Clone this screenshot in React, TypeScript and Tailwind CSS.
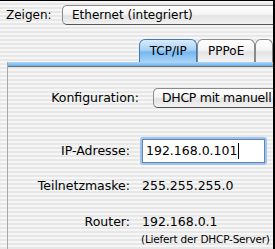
import React from "react";

const stripes =
  "bg-[repeating-linear-gradient(180deg,#f6f6f6_0px,#f6f6f6_2px,#e7e7e7_2px,#e7e7e7_4px)]";

function Popup({ label, className }: { label: string; className?: string }) {
  return (
    <div
      className={`flex h-[20px] items-center rounded-l-[5px] border border-r-0 border-[#8a8a8a] border-b-[#555] bg-[linear-gradient(180deg,#ffffff_0%,#f4f4f4_45%,#e2e2e2_55%,#f2f2f2_100%)] whitespace-nowrap overflow-hidden ${className ?? ""}`}
    >
      {label}
    </div>
  );
}

export default function App() {
  return (
    <div
      className={`flex h-[249px] w-[275px] flex-col overflow-hidden border-t border-r-2 border-black text-black ${stripes}`}
      style={{ fontFamily: '"DejaVu Sans", sans-serif' }}
    >
      {/* Zeigen */}
      <div className="mt-[4px] flex items-center pl-[6px] text-[12px]">
        <span className="w-[56px]">Zeigen:</span>
        <Popup label="Ethernet (integriert)" className="flex-1 pl-[9px]" />
      </div>

      {/* tabs */}
      <div className="mt-[14px] flex h-[23px] pl-[139px] text-[12px]">
        <div className="flex w-[65px] items-center justify-center rounded-t-[6px] border border-b-0 border-[#3f79b6] bg-[linear-gradient(180deg,#d9ecfb_0%,#a9d2f5_45%,#77b7ee_55%,#a8d3f7_100%)]">
          TCP/IP
        </div>
        <div className="flex w-[64px] items-center justify-center rounded-t-[6px] border border-b-0 border-[#8a8a8a] bg-[linear-gradient(180deg,#ffffff_0%,#f5f5f5_45%,#e4e4e4_55%,#f4f4f4_100%)]">
          PPPoE
        </div>
        <div className="w-[20px] rounded-t-[6px] border border-b-0 border-[#8a8a8a] bg-[linear-gradient(180deg,#ffffff_0%,#f5f5f5_45%,#e4e4e4_55%,#f4f4f4_100%)]" />
      </div>

      {/* tab box */}
      <div className="ml-[7px] flex flex-1 flex-col border-l border-[#a9a9a9]">
        <div className="h-[4px] bg-[linear-gradient(180deg,#aed6f8_0%,#6bb0ec_100%)]" />
        <div className="h-px bg-[#6e6e6e]" />

        <div className="mt-[21px] flex items-center text-[12.5px]">
          <span className="w-[131px] text-right">Konfiguration:</span>
          <Popup label="DHCP mit manuell" className="ml-[14px] flex-1 pl-[8px] tracking-[-0.3px]" />
        </div>

        <div className="mt-[29px] flex items-center text-[12.5px]">
          <span className="w-[122px] text-right">IP-Adresse:</span>
          <div className="ml-[10px] w-[127px] rounded-[3px] bg-[#9dc4ec] p-[2px]">
            <div className="flex h-[24px] items-center border border-[#5f86b6] bg-white pl-[3px]">
              192.168.0.101
              <span className="ml-px h-[16px] w-px bg-black" />
            </div>
          </div>
        </div>

        <div className="mt-[13px] flex h-[16px] items-center text-[12.5px]">
          <span className="w-[122px] text-right">Teilnetzmaske:</span>
          <span className="ml-[12px]">255.255.255.0</span>
        </div>

        <div className="mt-[20px] flex h-[16px] items-center text-[12.5px]">
          <span className="w-[122px] text-right">Router:</span>
          <span className="ml-[12px]">192.168.0.1</span>
        </div>

        <div className="mt-[3px] flex h-[13px] items-center whitespace-nowrap pl-[133px] text-[10.5px] tracking-[-0.2px]">
          (Liefert der DHCP-Server)
        </div>
      </div>
    </div>
  );
}
